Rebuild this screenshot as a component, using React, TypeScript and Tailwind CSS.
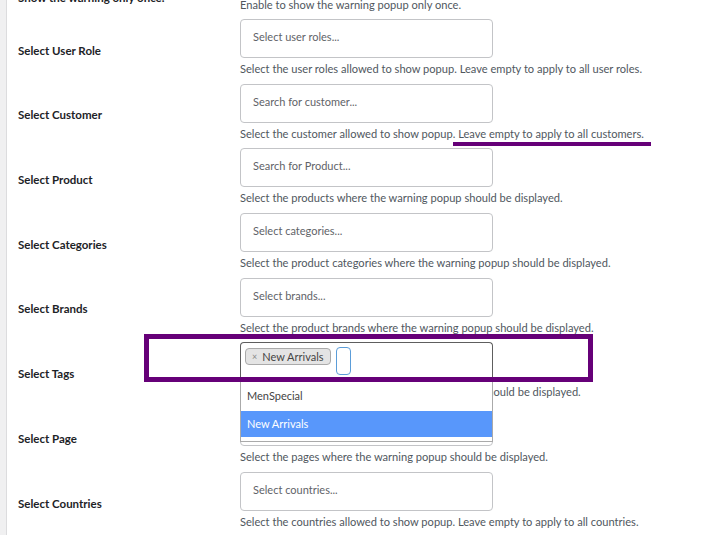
import React from "react";

// ─── Rows ───────────────────────────────────────────────────────────────────

const rows = [
    { label: "Select User Role", placeholder: "Select user roles...", help: "Select the user roles allowed to show popup. Leave empty to apply to all user roles." },
    { label: "Select Customer", placeholder: "Search for customer...", help: "Select the customer allowed to show popup. Leave empty to apply to all customers." },
    { label: "Select Product", placeholder: "Search for Product...", help: "Select the products where the warning popup should be displayed." },
    { label: "Select Categories", placeholder: "Select categories...", help: "Select the product categories where the warning popup should be displayed." },
    { label: "Select Brands", placeholder: "Select brands...", help: "Select the product brands where the warning popup should be displayed." },
    { label: "Select Tags", placeholder: "", help: "Select the product tags where the warning popup should be displayed.", tags: true },
    { label: "Select Page", placeholder: "Select pages...", help: "Select the pages where the warning popup should be displayed." },
    { label: "Select Countries", placeholder: "Select countries...", help: "Select the countries allowed to show popup. Leave empty to apply to all countries." },
];

function PlainBox({ placeholder }: { placeholder: string }) {
    return (
        <div className="h-[39px] w-[253px] rounded-[4px] border border-[#c3c4c7] bg-white px-[12px] pt-[9px] text-[11px] leading-[16px] text-[#5f6368]">
            {placeholder}
        </div>
    );
}

function TagsBox() {
    return (
        <div className="relative z-10 w-[253px]">
            <div className="flex h-[40px] items-start gap-[5px] rounded-t-[4px] border border-b-0 border-[#5e5e5e] bg-white px-[4px] pt-[4px]">
                <span className="mt-[1px] flex h-[17px] items-center gap-[5px] rounded-[4px] border border-[#aaaaaa] bg-[#e4e4e4] px-[6px] text-[11px] text-[#444]">
                    <span className="text-[9px] text-[#888]">×</span>
                    New Arrivals
                </span>
                <span className="h-[28px] w-[15px] rounded-[4px] border border-[#5b9dd9] bg-white" />
            </div>
            <div className="absolute left-0 right-0 top-full border border-t-0 border-[#aaaaaa] bg-white pb-[4px] text-[11px]">
                <div className="flex h-[29px] items-center px-[6px] pb-[2px] text-[#444]">MenSpecial</div>
                <div className="flex h-[26px] items-center bg-[#5897fb] px-[6px] text-white">New Arrivals</div>
            </div>
        </div>
    );
}

export default function App() {
    return (
        <div className="relative flex h-[535px] w-[704px] overflow-hidden bg-white font-['Lato',sans-serif]">
            <div className="w-[7px] shrink-0 border-r border-[#dcdcde] bg-[#f0f0f1]" />
            <div className="flex-1 pl-[11px]">
                {/* first row, cut off at the top */}
                <div className="-mt-[10px] flex items-start">
                    <div className="w-[222px] text-[11.5px] font-bold leading-[16px] text-[#1d2327]">
                        Show the warning only once.
                    </div>
                    <div className="pb-[6px] pt-[7px] text-[11.1px] leading-[16px] text-[#50575e]">
                        Enable to show the warning popup only once.
                    </div>
                </div>

                {rows.map((r) => (
                    <div key={r.label} className="flex items-center">
                        <div className="-mt-[2px] w-[222px] text-[11.5px] font-bold text-[#1d2327]">{r.label}</div>
                        <div className="pb-[6.7px]">
                            {r.tags ? <TagsBox /> : <PlainBox placeholder={r.placeholder} />}
                            <div className={`${r.tags ? "mt-[2px]" : "mt-[3px]"} text-[11.1px] leading-[16px] text-[#50575e]`}>
                                {r.help}
                            </div>
                        </div>
                    </div>
                ))}
            </div>

            {/* annotations */}
            <div className="pointer-events-none absolute left-[144px] top-[334px] z-20 h-[48px] w-[449px] border-[5px] border-[#660078]" />
            <div className="pointer-events-none absolute left-[453px] top-[142px] z-20 h-[4px] w-[198px] bg-[#660078]" />
        </div>
    );
}
